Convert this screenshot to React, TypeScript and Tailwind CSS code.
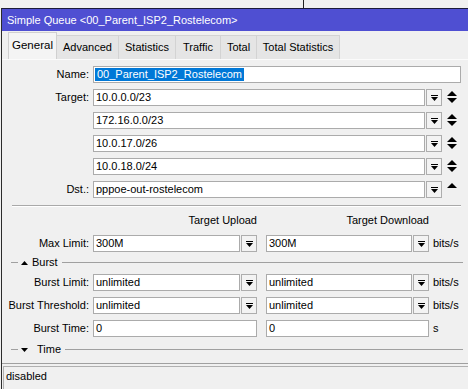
import React from "react";

function DropIcon() {
  return (
    <svg width="7" height="6" viewBox="0 0 7 6" className="block">
      <rect x="0" y="0" width="7" height="1" fill="#000" />
      <polygon points="0,2 7,2 3.5,6" fill="#000" />
    </svg>
  );
}

function DropBtn() {
  return (
    <div className="ml-[1px] flex h-[17px] w-[16px] shrink-0 items-center justify-center border border-[#adadad] bg-[#f3f3f3]">
      <DropIcon />
    </div>
  );
}

function UpDown({ only }: { only?: boolean }) {
  return (
    <svg width="10" height="13" viewBox="0 0 10 13" className="ml-[5px] block shrink-0">
      <polygon points="5,0 10,5 0,5" fill="#000" />
      {!only && <polygon points="0,7 10,7 5,12" fill="#000" />}
    </svg>
  );
}

function Field({ value, w }: { value: string; w: string }) {
  return (
    <div className={`flex h-[17px] shrink-0 items-center border border-[#ababab] bg-white pl-[2px] ${w}`}>
      <span className="leading-none">{value}</span>
    </div>
  );
}

function Label({ text }: { text: string }) {
  return <div className="w-[87px] shrink-0 text-right leading-none">{text}</div>;
}

function SectionLine({ label, up }: { label: string; up?: boolean }) {
  return (
    <div className="flex h-[13px] items-center pl-[9px] pr-[5px]">
      <div className="h-px w-[7px] bg-[#a0a0a0]" />
      <svg width="7" height="4" viewBox="0 0 7 4" className="ml-[3px] block">
        {up ? (
          <polygon points="3.5,0 7,4 0,4" fill="#000" />
        ) : (
          <polygon points="0,0 7,0 3.5,4" fill="#000" />
        )}
      </svg>
      <span className={`leading-none ${up ? "ml-[4px]" : "ml-[9px]"}`}>{label}</span>
      <div className="ml-[4px] h-px flex-1 bg-[#a0a0a0]" />
    </div>
  );
}

function PairRow({ label, a, b, unit, noBtn }: { label: string; a: string; b: string; unit: string; noBtn?: boolean }) {
  return (
    <div className="flex h-[17px] items-center">
      <Label text={label} />
      <div className="ml-[4px] flex items-center">
        {noBtn ? (
          <Field value={a} w="w-[164px]" />
        ) : (
          <>
            <Field value={a} w="w-[147px]" />
            <DropBtn />
          </>
        )}
      </div>
      <div className="ml-[9px] flex items-center">
        {noBtn ? (
          <Field value={b} w="w-[163px]" />
        ) : (
          <>
            <Field value={b} w="w-[146px]" />
            <DropBtn />
          </>
        )}
      </div>
      <span className="ml-[4px] leading-none">{unit}</span>
    </div>
  );
}

const tabs = [
  { name: "General", w: "w-[49px]" },
  { name: "Advanced", w: "w-[62px]" },
  { name: "Statistics", w: "w-[57px]" },
  { name: "Traffic", w: "w-[45px]" },
  { name: "Total", w: "w-[36px]" },
  { name: "Total Statistics", w: "w-[83px]" },
];

const targets = ["10.0.0.0/23", "172.16.0.0/23", "10.0.17.0/26", "10.0.18.0/24"];

export default function App() {
  return (
    <div
      className="h-[389px] w-[468px] overflow-hidden bg-[#f0f0f0] text-[11px] text-black"
      style={{ fontFamily: '"Liberation Sans", Arial, sans-serif' }}
    >
      <div className="flex h-[8px]">
        <div className="w-[303px]" />
        <div className="border-l border-[#222]" />
      </div>

      <div className="ml-[1px] flex h-[381px] flex-col border-l border-[#2b2b2b]">
        <div className="flex h-[23px] shrink-0 items-center border-t border-[#1b1b3a] bg-[#4f4fd2] pl-[5px] text-white">
          Simple Queue &lt;00_Parent_ISP2_Rostelecom&gt;
        </div>

        <div className="flex h-[28px] shrink-0 items-end pl-[6px]">
          {tabs.map((t, i) =>
            i === 0 ? (
              <div
                key={t.name}
                className={`flex h-[27px] items-center justify-center border border-b-0 border-[#d0d0d0] bg-[#f4f4f4] text-[11.5px] ${t.w}`}
              >
                {t.name}
              </div>
            ) : (
              <div
                key={t.name}
                className={`flex h-[24px] items-center justify-center border border-l-0 border-b-0 border-[#d3d3d3] bg-[#e5e5e5] ${t.w}`}
              >
                {t.name}
              </div>
            )
          )}
        </div>

        <div className="flex flex-1 flex-col border-t border-[#fbfbfb]">
          <div className="mt-[6px] flex h-[17px] items-center">
            <Label text="Name:" />
            <div className="ml-[4px] flex h-[17px] w-[368px] items-stretch border border-[#ababab] bg-white py-px pl-px">
              <span className="flex items-center bg-[#0078d7] px-[2px] leading-none text-white">
                00_Parent_ISP2_Rostelecom
              </span>
            </div>
          </div>

          {targets.map((t, i) => (
            <div key={t} className="mt-[6px] flex h-[17px] items-center">
              <Label text={i === 0 ? "Target:" : ""} />
              <div className="ml-[4px] flex items-center">
                <Field value={t} w="w-[332px]" />
                <DropBtn />
                <UpDown />
              </div>
            </div>
          ))}

          <div className="mt-[6px] flex h-[17px] items-center">
            <Label text="Dst.:" />
            <div className="ml-[4px] flex items-center">
              <Field value="pppoe-out-rostelecom" w="w-[332px]" />
              <DropBtn />
              <UpDown only />
            </div>
          </div>

          <div className="ml-[10px] mt-[7px] w-[449px] border-t border-[#a9a9a9] border-b border-b-white" />

          <div className="mt-[7px] flex h-[13px] items-center leading-none">
            <div className="ml-[91px] w-[164px] text-right">Target Upload</div>
            <div className="ml-[9px] w-[163px] text-right">Target Download</div>
          </div>

          <div className="mt-[8px]">
            <PairRow label="Max Limit:" a="300M" b="300M" unit="bits/s" />
          </div>

          <div className="mt-[4px]">
            <SectionLine label="Burst" up />
          </div>

          <div className="mt-[5px]">
            <PairRow label="Burst Limit:" a="unlimited" b="unlimited" unit="bits/s" />
          </div>
          <div className="mt-[6px]">
            <PairRow label="Burst Threshold:" a="unlimited" b="unlimited" unit="bits/s" />
          </div>
          <div className="mt-[6px]">
            <PairRow label="Burst Time:" a="0" b="0" unit="s" noBtn />
          </div>

          <div className="mt-[6px]">
            <SectionLine label="Time" />
          </div>

          <div className="mt-[7px] flex flex-1 flex-col border-t border-[#a0a0a0] pt-[2px]">
            <div className="ml-[1px] flex flex-1 items-start border-l border-t border-[#b0b0b0] pl-[2px] pt-[4px] leading-none">
              disabled
            </div>
          </div>
        </div>
      </div>
    </div>
  );
}
